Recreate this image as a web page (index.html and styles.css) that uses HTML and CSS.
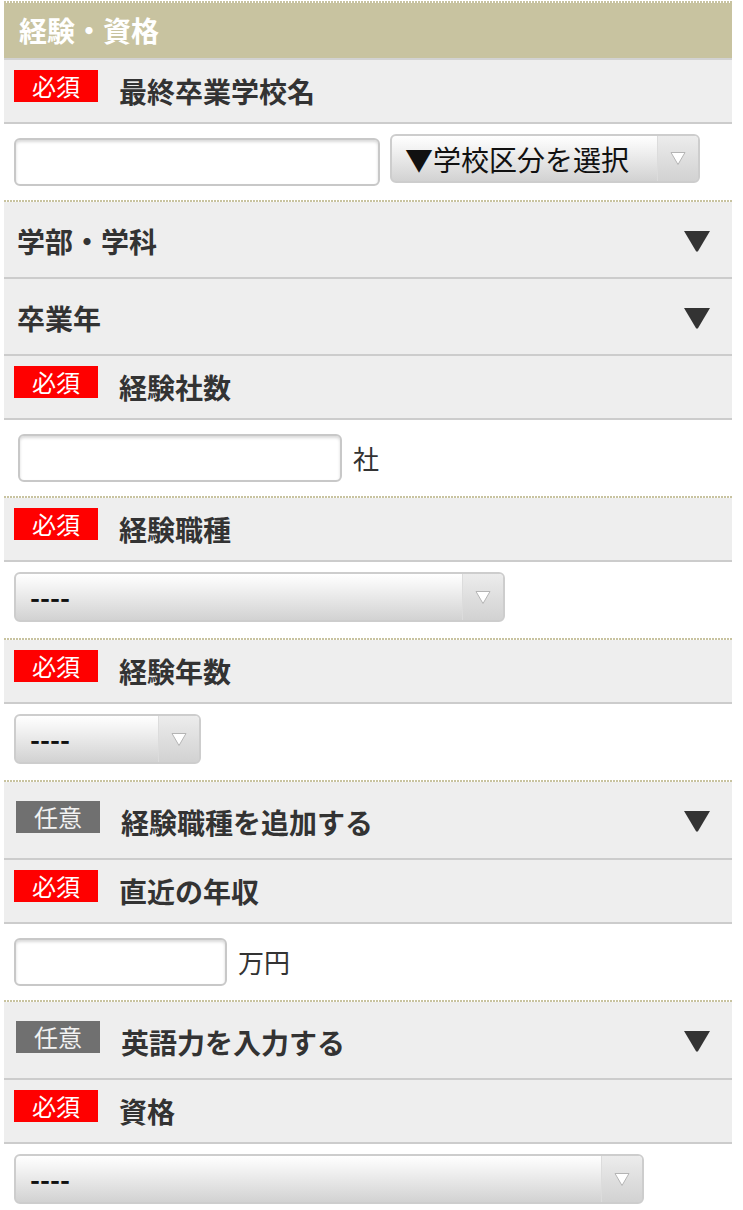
FILE: index.html
```html
<!DOCTYPE html>
<html lang="ja">
<head>
    <meta charset="UTF-8">
    <meta name="viewport" content="width=device-width, initial-scale=1.0">
    <title>経験・資格</title>
    <link rel="stylesheet" href="styles.css">
</head>
<body>
    <div class="form">
        <section class="section">
            <h2 class="section-title">経験・資格</h2>
            <div class="row row-required">
                <span class="badge badge-required">必須</span>
                <span class="row-label">最終卒業学校名</span>
            </div>
            <div class="field">
                <input class="text-input input-school" type="text">
                <div class="select select-school">
                    <span class="select-value select-value-thin">▼学校区分を選択</span>
                    <span class="select-arrow">
                        <svg width="16" height="15" viewBox="0 0 16 15"><path d="M1 1.5H15L8 13.5Z" fill="#fff" stroke="#b4b4b4"/></svg>
                    </span>
                </div>
            </div>
        </section>

        <section class="section">
            <div class="row row-toggle">
                <span class="row-label">学部・学科</span>
                <svg class="toggle-icon" width="26" height="21" viewBox="0 0 26 21"><path d="M0 0H26L13.8 20.5H12.2Z" fill="#333"/></svg>
            </div>
            <div class="row row-toggle">
                <span class="row-label">卒業年</span>
                <svg class="toggle-icon" width="26" height="21" viewBox="0 0 26 21"><path d="M0 0H26L13.8 20.5H12.2Z" fill="#333"/></svg>
            </div>
            <div class="row row-required">
                <span class="badge badge-required">必須</span>
                <span class="row-label">経験社数</span>
            </div>
            <div class="field">
                <input class="text-input input-count" type="text">
                <span class="unit">社</span>
            </div>
        </section>

        <section class="section">
            <div class="row row-required">
                <span class="badge badge-required">必須</span>
                <span class="row-label">経験職種</span>
            </div>
            <div class="field">
                <div class="select select-job">
                    <span class="select-value">----</span>
                    <span class="select-arrow">
                        <svg width="16" height="15" viewBox="0 0 16 15"><path d="M1 1.5H15L8 13.5Z" fill="#fff" stroke="#b4b4b4"/></svg>
                    </span>
                </div>
            </div>
        </section>

        <section class="section">
            <div class="row row-required">
                <span class="badge badge-required">必須</span>
                <span class="row-label">経験年数</span>
            </div>
            <div class="field">
                <div class="select select-years">
                    <span class="select-value">----</span>
                    <span class="select-arrow">
                        <svg width="16" height="15" viewBox="0 0 16 15"><path d="M1 1.5H15L8 13.5Z" fill="#fff" stroke="#b4b4b4"/></svg>
                    </span>
                </div>
            </div>
        </section>

        <section class="section">
            <div class="row row-toggle row-optional">
                <span class="badge badge-optional">任意</span>
                <span class="row-label">経験職種を追加する</span>
                <svg class="toggle-icon" width="26" height="21" viewBox="0 0 26 21"><path d="M0 0H26L13.8 20.5H12.2Z" fill="#333"/></svg>
            </div>
            <div class="row row-required">
                <span class="badge badge-required">必須</span>
                <span class="row-label">直近の年収</span>
            </div>
            <div class="field">
                <input class="text-input input-income" type="text">
                <span class="unit">万円</span>
            </div>
        </section>

        <section class="section">
            <div class="row row-toggle row-optional">
                <span class="badge badge-optional">任意</span>
                <span class="row-label">英語力を入力する</span>
                <svg class="toggle-icon" width="26" height="21" viewBox="0 0 26 21"><path d="M0 0H26L13.8 20.5H12.2Z" fill="#333"/></svg>
            </div>
            <div class="row row-required">
                <span class="badge badge-required">必須</span>
                <span class="row-label">資格</span>
            </div>
            <div class="field">
                <div class="select select-license">
                    <span class="select-value">----</span>
                    <span class="select-arrow">
                        <svg width="16" height="15" viewBox="0 0 16 15"><path d="M1 1.5H15L8 13.5Z" fill="#fff" stroke="#b4b4b4"/></svg>
                    </span>
                </div>
            </div>
        </section>
    </div>
</body>
</html>
```

FILE: styles.css
```css
body {
    margin: 0;
    padding-top: 1px;
    background: #fff;
    font-family: "Noto Sans CJK JP", "Noto Sans", sans-serif;
    color: #333;
}
.form {
    width: 728px;
    margin-left: 4px;
}
.section::before {
    content: "";
    display: block;
    height: 2px;
    background: repeating-linear-gradient(90deg, #c8c3a0 0 2px, #fff 2px 3px);
}
.section-title {
    margin: 0;
    height: 55px;
    line-height: 55px;
    padding-left: 15px;
    background: #c8c3a0;
    border-bottom: 2px solid #d2d2d2;
    color: #fff;
    font-size: 28px;
    font-weight: bold;
}
.row {
    display: flex;
    background: #eee;
    border-bottom: 2px solid #ccc;
    box-sizing: border-box;
}
.row-required {
    height: 64px;
    padding-left: 10px;
    align-items: flex-start;
}
.row-required .badge {
    margin-top: 10px;
}
.row-required .row-label {
    margin-top: 11px;
}
.row-toggle {
    height: 77px;
    padding: 3px 22px 0 13px;
    align-items: center;
}
.row-optional {
    height: 78px;
    padding-left: 12px;
}
.row-optional .badge {
    margin-bottom: 9px;
}
.row-label {
    font-size: 28px;
    font-weight: bold;
    line-height: 40px;
    color: #333;
}
.badge + .row-label {
    margin-left: 21px;
}
.toggle-icon {
    margin-left: auto;
}
.badge {
    width: 84px;
    height: 32px;
    line-height: 32px;
    text-align: center;
    font-size: 24px;
    flex-shrink: 0;
}
.badge-required {
    background: #f00;
    color: #fff;
}
.badge-optional {
    background: #707070;
    color: #f2f2f2;
}
.field {
    display: flex;
    align-items: flex-start;
    height: 76px;
    box-sizing: border-box;
    padding: 10px 0 0 10px;
}
.text-input {
    margin: 4px 0 0;
    height: 48px;
    box-sizing: border-box;
    border: 2px solid #c8c8c8;
    border-radius: 6px;
    box-shadow: inset 0 2px 3px rgba(0, 0, 0, 0.15);
    background: #fff;
    font-size: 26px;
    padding: 0 10px;
}
.input-school {
    width: 366px;
}
.input-count {
    width: 324px;
    margin-left: 4px;
}
.input-income {
    width: 213px;
}
.unit {
    margin: 4px 0 0 11px;
    line-height: 48px;
    font-size: 26px;
    color: #333;
}
.select {
    display: flex;
    height: 50px;
    box-sizing: border-box;
    border: 2px solid #cdcdcd;
    border-radius: 6px;
    background: linear-gradient(#fff, #f4f4f4 25%, #d2d2d2);
    overflow: hidden;
}
.select-value {
    flex: 1;
    line-height: 46px;
    padding-left: 14px;
    font-size: 27px;
    font-weight: bold;
    color: #111;
    white-space: nowrap;
}
.select-value-thin {
    font-weight: normal;
    padding-left: 13px;
    font-size: 28px;
}
.select-arrow {
    width: 40px;
    display: flex;
    align-items: center;
    justify-content: center;
    border-left: 1px solid #dcdcdc;
    background: linear-gradient(#ececec, #dcdcdc 60%, #d2d2d2);
}
.select-school {
    width: 310px;
    height: 49px;
    margin-left: 10px;
}
.select-job {
    width: 491px;
}
.select-years {
    width: 187px;
}
.select-license {
    width: 630px;
}
```
